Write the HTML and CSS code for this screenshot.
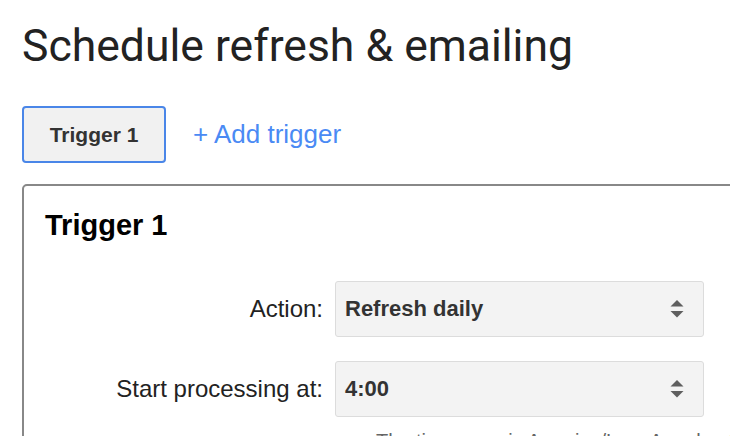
FILE: index.html
```html
<!DOCTYPE html>
<html lang="en">
<head>
    <meta charset="UTF-8">
    <meta name="viewport" content="width=device-width, initial-scale=1.0">
    <title>Schedule refresh &amp; emailing</title>
    <link rel="stylesheet" href="styles.css">
</head>
<body>
    <main class="page">
        <h1 class="page-title">Schedule refresh &amp; emailing</h1>

        <div class="tabs">
            <button class="tab active">Trigger 1</button>
            <a href="#" class="add-trigger">+ Add trigger</a>
        </div>

        <section class="trigger-card">
            <h2 class="trigger-title">Trigger 1</h2>

            <div class="field-row">
                <label class="field-label">Action:</label>
                <div class="select-box">
                    <span>Refresh daily</span>
                    <svg class="select-arrows" width="14" height="18" viewBox="0 0 14 18">
                        <polygon points="7,0 13.5,6.5 0.5,6.5" />
                        <polygon points="0.5,11 13.5,11 7,17.5" />
                    </svg>
                </div>
            </div>

            <div class="field-row">
                <label class="field-label">Start processing at:</label>
                <div class="select-box">
                    <span>4:00</span>
                    <svg class="select-arrows" width="14" height="18" viewBox="0 0 14 18">
                        <polygon points="7,0 13.5,6.5 0.5,6.5" />
                        <polygon points="0.5,11 13.5,11 7,17.5" />
                    </svg>
                </div>
            </div>

            <p class="hint">The time zone is America/Los_Angeles (local time)</p>
        </section>
    </main>
</body>
</html>
```

FILE: styles.css
```css
body {
    margin: 0;
    background-color: white;
    font-family: 'Liberation Sans', Arial, sans-serif;
    overflow: hidden;
}

.page {
    padding: 0 0 0 22px;
    width: 760px;
}

.page-title {
    margin: 20px 0 0 0;
    font-family: Roboto, 'Liberation Sans', sans-serif;
    font-weight: 400;
    font-size: 44.5px;
    line-height: 52px;
    color: #222;
}

.tabs {
    display: flex;
    align-items: center;
    gap: 27px;
    margin-top: 34px;
}

.tab {
    box-sizing: border-box;
    width: 144px;
    height: 57px;
    background-color: #f1f1f1;
    border: 2px solid #4a86e8;
    border-radius: 4px;
    font-family: 'Liberation Sans', Arial, sans-serif;
    font-weight: bold;
    font-size: 21px;
    color: #333;
    padding: 0;
}

.add-trigger {
    font-size: 26px;
    color: #4a8af4;
    text-decoration: none;
}

.trigger-card {
    margin-top: 21px;
    border: 2px solid #888;
    border-radius: 5px;
    padding: 23px 0 0 21px;
    height: 300px;
}

.trigger-title {
    margin: 0 0 40px 0;
    font-size: 29px;
    line-height: 32px;
    font-weight: bold;
    color: #000;
}

.field-row {
    display: flex;
    align-items: center;
    gap: 12px;
    margin-bottom: 24px;
}

.field-label {
    width: 278px;
    text-align: right;
    font-size: 24px;
    color: #222;
}

.select-box {
    box-sizing: border-box;
    width: 369px;
    height: 56px;
    display: flex;
    align-items: center;
    justify-content: space-between;
    padding: 0 19px 0 9px;
    background-color: #f3f3f3;
    border: 1px solid #dcdcdc;
    border-radius: 3px;
    font-size: 22px;
    font-weight: bold;
    color: #333;
}

.select-arrows {
    fill: #5f5f5f;
}

.hint {
    margin: -12px 0 0 331px;
    font-size: 20px;
    line-height: 24px;
    color: #666;
}
```
